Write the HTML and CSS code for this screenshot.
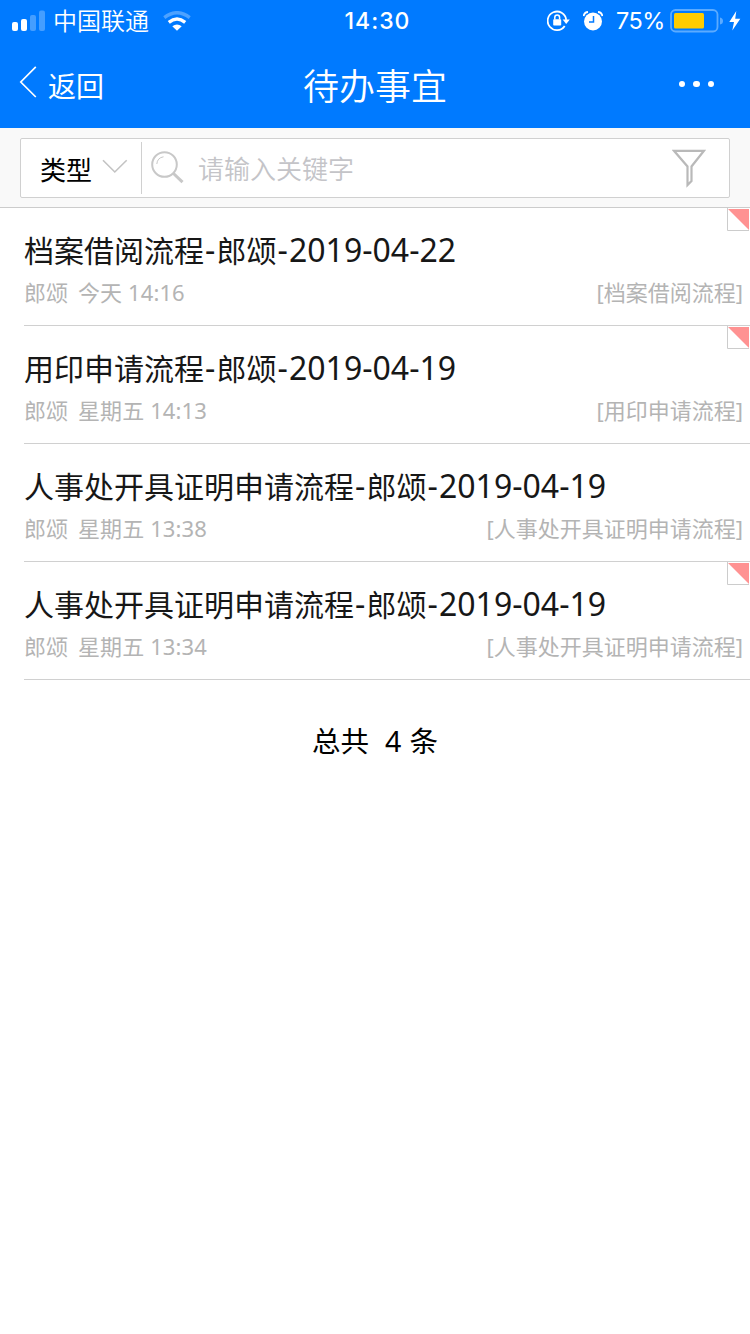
FILE: index.html
```html
<!DOCTYPE html>
<html lang="zh-CN">
<head>
<meta charset="utf-8">
<title>待办事宜</title>
<link rel="stylesheet" href="styles.css">
</head>
<body>
<header class="top">
  <div class="status">
    <div class="status-left">
      <svg class="signal" width="34" height="22" viewBox="0 0 34 22" fill="#fff"><rect x="0" y="12" width="6" height="9" rx="2"/><rect x="9" y="9" width="6" height="12" rx="2"/><g opacity=".27"><rect x="18" y="5" width="6" height="16" rx="2"/><rect x="27" y="0.5" width="6" height="20.5" rx="2"/></g></svg>
      <span class="carrier">中国联通</span>
      <svg class="wifi" width="28" height="20" viewBox="0 0 28 20" fill="none" stroke="#fff" stroke-width="3.400"><path d="M1.300 6.600Q14-3.200 26.700 6.600" opacity=".3"/><path d="M5.800 11.300Q14 4.800 22.200 11.300"/><path d="M9.300 15.200Q14 11.600 18.700 15.200L14 19.800Z" fill="#fff" stroke="none"/></svg>
    </div>
    <div class="clock">14:30</div>
    <div class="status-right">
      <svg class="lock" width="24" height="22" viewBox="0 0 24 22" fill="none" stroke="#fff" stroke-width="1.8"><path d="M17.700 16A9.300 9.300 0 1 1 19.200 9.800"/><path d="M15.600 9.400H22.800L19.200 14Z" fill="#fff" stroke="none"/><rect x="6.200" y="9.200" width="8" height="6.300" rx=".8" fill="#fff" stroke="none"/><path d="M7.800 9.500V7.500a2.400 2.400 0 0 1 4.800 0V9.500" stroke-width="1.500"/></svg>
      <svg class="alarm" width="20" height="20" viewBox="0 0 20 20"><circle cx="10" cy="10.500" r="9" fill="#fff"/><path d="M.6 5Q1.300 1.300 5 1M19.400 5Q18.700 1.300 15 1" fill="none" stroke="#fff" stroke-width="1.800"/><path d="M10.500 5V11H6" fill="none" stroke="#007aff" stroke-width="1.500"/></svg>
      <span class="percent">75%</span>
      <svg class="battery" width="54" height="24" viewBox="0 0 54 24"><rect x="1" y="1" width="46.500" height="21.500" rx="4.500" fill="none" stroke="#5cabff" stroke-width="1.800"/><rect x="4" y="4" width="30" height="15.500" rx="1.500" fill="#fc0"/><path d="M50 8.500Q53 9 53 12T50 15.500Z" fill="#5cabff"/></svg>
      <svg class="bolt" width="12" height="20" viewBox="0 0 12 20"><path d="M7.300 0L.3 11H5L3.300 19.500L11.300 7.800H6.200Z" fill="#fff"/></svg>
    </div>
  </div>
  <nav class="nav">
    <a class="back"><svg width="18" height="32" viewBox="0 0 18 32" fill="none" stroke="#fff" stroke-width="1.700"><path d="M16.800 .8L1.800 16L16.800 31"/></svg><span>返回</span></a>
    <h1 class="title">待办事宜</h1>
    <div class="more"><i></i><i></i><i></i></div>
  </nav>
</header>
<section class="search">
  <div class="search-box">
    <div class="type"><span>类型</span><svg width="26" height="15" viewBox="0 0 26 15" fill="none" stroke="#c3c3c3" stroke-width="1.600"><path d="M1 1.300L12.800 13L24.700 1.300"/></svg></div>
    <svg class="glass" width="34" height="34" viewBox="0 0 34 34" fill="none" stroke="#c8c8c8"><circle cx="13.500" cy="13.500" r="12.300" stroke-width="2"/><path d="M5.800 13A8 8 0 0 1 12.500 5.800" stroke-width="1"/><path d="M22.500 22.500L31.500 31.200" stroke-width="3"/></svg>
    <span class="placeholder">请输入关键字</span>
    <svg class="filter" width="34" height="40" viewBox="0 0 34 40" fill="none" stroke="#b9b9b9" stroke-width="2.200"><path d="M2 2.800H32L19.500 18.500V33L15.500 37V18.500Z"/></svg>
  </div>
</section>
<main class="list">
  <article class="item">
    <svg class="corner" viewBox="0 0 23 23"><path d="M.5 0V22.500H22" fill="none" stroke="#ccc"/><path d="M1 1H22V22Z" fill="#ff9292"/></svg>
    <h2 class="name">档案借阅流程<b>-</b>郎颂<b>-</b><span class="date">2019-04-22</span></h2>
    <div class="meta"><span class="who">郎颂</span><span class="when">今天 14:16</span><span class="kind">[档案借阅流程]</span></div>
  </article>
  <article class="item">
    <svg class="corner" viewBox="0 0 23 23"><path d="M.5 0V22.500H22" fill="none" stroke="#ccc"/><path d="M1 1H22V22Z" fill="#ff9292"/></svg>
    <h2 class="name">用印申请流程<b>-</b>郎颂<b>-</b><span class="date">2019-04-19</span></h2>
    <div class="meta"><span class="who">郎颂</span><span class="when">星期五 14:13</span><span class="kind">[用印申请流程]</span></div>
  </article>
  <article class="item">
    <h2 class="name">人事处开具证明申请流程<b>-</b>郎颂<b>-</b><span class="date">2019-04-19</span></h2>
    <div class="meta"><span class="who">郎颂</span><span class="when">星期五 13:38</span><span class="kind">[人事处开具证明申请流程]</span></div>
  </article>
  <article class="item">
    <svg class="corner" viewBox="0 0 23 23"><path d="M.5 0V22.500H22" fill="none" stroke="#ccc"/><path d="M1 1H22V22Z" fill="#ff9292"/></svg>
    <h2 class="name">人事处开具证明申请流程<b>-</b>郎颂<b>-</b><span class="date">2019-04-19</span></h2>
    <div class="meta"><span class="who">郎颂</span><span class="when">星期五 13:34</span><span class="kind">[人事处开具证明申请流程]</span></div>
  </article>
</main>
<footer class="total"><span>总共</span><span class="count">4</span><span>条</span></footer>
</body>
</html>
```
FILE: styles.css
```css
* { box-sizing: border-box; }
body {
  margin: 0;
  min-height: 1334px;
  background: #fff;
  color: #171717;
  font-family: "Noto Sans", "Noto Sans CJK SC", sans-serif;
}
svg { display: block; flex: none; }
.top { height: 128px; background: #007aff; color: #fff; }
.status {
  display: grid;
  grid-template-columns: 1fr 80px 1fr;
  height: 40px;
  font-family: Inter, "Noto Sans CJK SC", sans-serif;
}
.status-left, .status-right { display: flex; align-items: center; white-space: nowrap; }
.status-left { padding-left: 12px; }
.status-right { justify-content: flex-end; padding-right: 9px; }
.signal { margin-right: 7px; }
.carrier { padding-bottom: 2px; font: 350 24px/38px "Noto Sans CJK SC", sans-serif; }
.wifi { margin-left: 14px; }
.clock { padding-left: 5px; font-size: 23px; font-weight: 550; line-height: 42px; letter-spacing: 1px; text-align: center; }
.lock { margin-right: 12px; }
.alarm { margin-right: 13px; }
.percent { width: 49px; font-size: 23.500px; line-height: 42px; letter-spacing: -.5px; }
.battery { margin-left: 5px; margin-right: 5px; }
.nav {
  display: grid;
  grid-template-columns: 1fr 160px 1fr;
  align-items: center;
  height: 88px;
  padding: 0 36px 0 19px;
}
.back { display: flex; align-items: center; gap: 11px; font-size: 28px; line-height: 40px; }
.back svg { margin-bottom: 4px; }
.back span { margin-top: 4px; }
.title { margin: 0 -9px 0 8px; font: 350 36px/50px "Noto Sans CJK SC", sans-serif; text-align: center; }
.more { display: flex; justify-content: flex-end; gap: 8px; }
.more i { width: 6.500px; height: 6.500px; border-radius: 50%; background: #fff; }
.search { height: 80px; padding: 10px 20px; background: #f9f9f9; border-bottom: 1px solid #ccc; }
.search-box {
  display: flex;
  align-items: center;
  height: 60px;
  padding-right: 23px;
  background: #fff;
  border: 1px solid #d0d0d0;
  border-radius: 2px;
}
.type {
  display: flex;
  align-items: center;
  gap: 10px;
  width: 121px;
  height: 52px;
  padding-left: 19px;
  border-right: 1px solid #d0d0d0;
  color: #000;
  font-size: 26px;
  line-height: 40px;
}
.type svg { margin-bottom: 4px; }
.type span { padding-top: 3px; }
.glass { margin-left: 9px; }
.placeholder { margin: 0 auto 0 13px; color: #c4c4c8; font: 350 26px/40px "Noto Sans CJK SC", sans-serif; }
.item {
  position: relative;
  height: 118px;
  margin-left: 24px;
  padding-top: 20px;
  border-bottom: 1px solid #d0d0d0;
}
.corner { position: absolute; top: 0; right: 0; width: 23px; height: 23px; }
.name { display: flex; align-items: baseline; height: 44px; margin: 0; font-size: 30px; font-weight: 400; line-height: 44px; white-space: nowrap; }
.name b { width: 12.500px; font-size: 32px; font-weight: 400; line-height: 44px; text-align: center; }
.date { font-size: 32px; line-height: 44px; }
.meta { display: flex; padding: 4px 7px 0 0; color: #b4b4b4; font-size: 22px; line-height: 32px; }
.who { margin-right: 10px; }
.when { letter-spacing: .1px; }
.kind { margin-left: auto; }
.total { display: flex; justify-content: center; margin-top: 41px; color: #000; font-size: 28.500px; line-height: 40px; }
.count { margin: 0 8px 0 16px; }
```
